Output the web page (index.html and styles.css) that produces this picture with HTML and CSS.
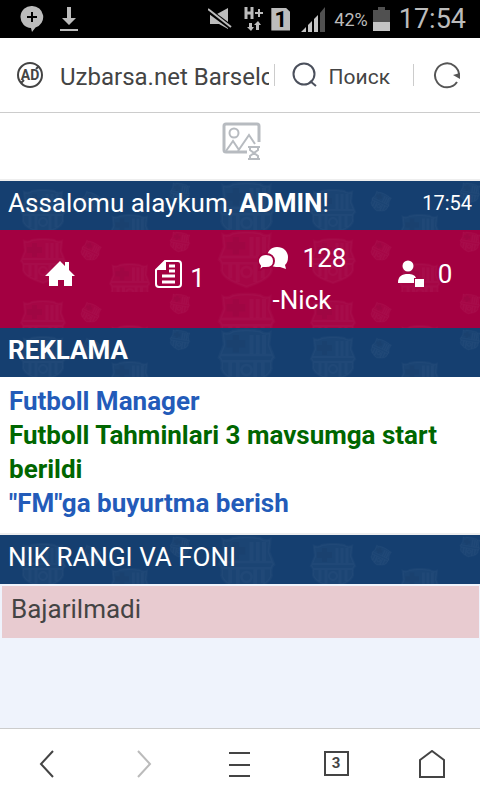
FILE: index.html
```html
<!DOCTYPE html>
<html lang="uz">
<head>
<meta charset="utf-8">
<meta name="viewport" content="width=device-width, initial-scale=1">
<title>Uzbarsa.net Barselona</title>
<link rel="stylesheet" href="styles.css">
</head>
<body>
<div class="status">
  <svg width="24" height="28" viewBox="0 0 24 28"><path fill="#bcbcbc" d="M12 1a11 11 0 0 1 3.500 21.500L12 27l-1-4A11 11 0 0 1 12 1z"/><path stroke="#000" stroke-width="2" d="M12 7v10M7 12h10"/></svg>
  <svg class="download" width="18" height="24" viewBox="0 0 18 24"><path fill="#bcbcbc" d="M7 0h4v11h5l-7 7-7-7h5zM0 22h18v2H0z"/></svg>
  <svg class="mute" width="24" height="24" viewBox="0 0 24 24"><path fill="#bcbcbc" d="M2 7h7L20 1v21l-9-5H2z"/><path stroke="#000" stroke-width="5" d="M0 3l24 18"/><path stroke="#bcbcbc" stroke-width="2" d="M0 2l23 18"/></svg>
  <svg class="data" width="19" height="26" viewBox="0 0 19 26"><path fill="none" stroke="#bcbcbc" stroke-width="3" d="M2 1v12M8 1v12M2 7h6"/><path stroke="#bcbcbc" stroke-width="2" d="M11 7h8M15 3v8"/><path fill="#bcbcbc" d="M5 17h3v4h2l-3 4-4-4h2zM12 24v-5h-2l4-4 3 4h-2v5z"/></svg>
  <span class="sim">1</span>
  <svg class="signal" width="24" height="25" viewBox="0 0 24 25"><path fill="#c4c4c4" d="M0 25l5-5v5zM7 18l4-4v11H7zM13 12l4-4v17h-4z"/><path fill="#505050" d="M19 6l5-6v25h-5z"/></svg>
  <span class="percent">42%</span>
  <svg class="battery" width="17" height="24" viewBox="0 0 17 24"><path fill="#505050" d="M0 3h5V0h7v3h5v12H0z"/><path fill="#c4c4c4" d="M0 15h17v9H0z"/></svg>
  <span class="clock">17:54</span>
</div>

<header class="browser">
  <button class="plain" aria-label="AD">
    <svg width="28" height="28" viewBox="0 0 28 28" fill="none" stroke="#444" stroke-width="2"><circle cx="14" cy="14" r="12"/><text x="14" y="19" text-anchor="middle" class="ad">AD</text><path d="M5 22l3-3M20 8l3-3"/></svg>
  </button>
  <a class="address" href="#">Uzbarsa.net Barselona</a>
  <button class="plain search">
    <svg width="25" height="26" viewBox="0 0 25 26" fill="none" stroke="#4b505c" stroke-width="2"><circle cx="12" cy="12" r="10.500"/><path d="M18 19l6 5"/></svg>
    <span>Поиск</span>
  </button>
  <button class="plain reload" aria-label="Reload">
    <svg width="28" height="28" viewBox="0 0 28 28"><path fill="none" stroke="#555" stroke-width="2" d="M24 21A12 12 0 1 1 26 15"/><path fill="#555" d="M20 14l7-2v6z"/></svg>
  </button>
</header>

<main>
  <div class="banner">
    <svg width="39" height="39" viewBox="0 0 39 39" fill="none" stroke="#b7bbc0" stroke-width="2"><path stroke-width="3" d="M25 30H4q-2 0-2-2V4q0-2 2-2h31q2 0 2 2v16"/><circle cx="12" cy="11" r="4.500"/><path d="M4 29l7-10 6 9M16 29L27 13l6 9"/><path d="M26 25h12M26 37h12M28 25v3l4 3-4 3v3M36 25v3l-4 3 4 3v3"/></svg>
  </div>
  <div class="bar greeting">
    <span>Assalomu alaykum, <b>ADMIN</b>!</span>
    <time>17:54</time>
  </div>
  <nav class="menu">
    <a href="#" aria-label="Home"><svg width="30" height="26" viewBox="0 0 30 26"><path fill="#fff" d="M15 0l5 5V1h4v8l6 6h-3v10h-8v-6h-6v6H4V15H0z"/></svg></a>
    <a href="#" class="news"><svg width="27" height="30" viewBox="0 0 27 30" fill="none" stroke="#fff"><path stroke-width="2" d="M10 2h13q3 0 3 3v20q0 3-3 3H4q-3 0-3-3V11z"/><path fill="#fff" stroke="none" d="M1 11L11 1v10z"/><path stroke-width="3" d="M14 7h6M14 12h6M7 17h13M7 23h13"/></svg><span>1</span></a>
    <a href="#" class="chat"><span><svg width="31" height="25" viewBox="0 0 31 25"><path fill="#fff" d="M19 1c7 0 11 5 11 10 0 4-1 6-3 8l1 4-6-2-4 0C10 20 9 16 9 11S13 1 19 1z"/><path fill="#fff" stroke="#a30041" stroke-width="2" d="M8 8c5 0 8 3 8 7s-3 7-8 7l-3 0-4 3 1-5c-5-6 0-12 6-12z"/></svg>128</span><span>-Nick</span></a>
    <a href="#" class="guests"><svg width="26" height="28" viewBox="0 0 26 28"><g fill="#fff"><circle cx="10" cy="6" r="5.500"/><path d="M0 23c0-7 4-9 10-9 4 0 7 1 8 4h-2v5zM17 19h9v8h-9z"/></g></svg><span>0</span></a>
  </nav>
  <h2 class="bar"><b>REKLAMA</b></h2>
  <div class="links">
    <a href="#">Futboll Manager</a>
    <a href="#" class="green">Futboll Tahminlari 3 mavsumga start berildi</a>
    <a href="#">"FM"ga buyurtma berish</a>
  </div>
  <h2 class="bar">NIK RANGI VA FONI</h2>
  <p class="alert">Bajarilmadi</p>
</main>

<footer class="toolbar">
  <button class="plain" aria-label="Back"><svg width="28" height="28" viewBox="0 0 28 28" fill="none" stroke="#444" stroke-width="2"><path d="M19 1L7 14l12 13"/></svg></button>
  <button class="plain" aria-label="Forward"><svg width="28" height="28" viewBox="0 0 28 28" fill="none" stroke="#bbb" stroke-width="2"><path d="M8 1l12 13L8 27"/></svg></button>
  <button class="plain" aria-label="Menu"><svg width="28" height="28" viewBox="0 0 28 28" stroke="#444" stroke-width="2"><path d="M3 3h21M3 15h21M3 26h21"/></svg></button>
  <button class="plain"><span class="tabs">3</span></button>
  <button class="plain" aria-label="Home"><svg width="28" height="28" viewBox="0 0 28 28" fill="none" stroke="#444" stroke-width="2"><path d="M2 10l12-9 12 9v17H2z"/></svg></button>
</footer>
</body>
</html>
```
FILE: styles.css
```css
* { box-sizing: border-box; }
body {
  margin: 0;
  min-height: 100vh;
  display: flex;
  flex-direction: column;
  background: #eff3fc;
  color: #444;
  font: 26px/34px Roboto, sans-serif;
}
svg { display: block; flex: none; }
a { color: inherit; text-decoration: none; }
.plain {
  display: flex;
  align-items: center;
  justify-content: center;
  padding: 0;
  border: 0;
  background: none;
  color: inherit;
  font: inherit;
}

.status {
  display: flex;
  align-items: center;
  height: 38px;
  padding: 0 14px 0 20px;
  background: #000;
  color: #bcbcbc;
}
.download { margin-left: 16px; }
.mute { margin-left: auto; }
.data { margin-left: 12px; }
.sim {
  width: 19px;
  margin-left: 8px;
  background: #bcbcbc;
  color: #000;
  clip-path: polygon(0 0, 75% 0, 100% 20%, 100% 100%, 0 100%);
  font-size: 22px;
  font-weight: 700;
  line-height: 23px;
  text-align: center;
}
.signal { margin-left: 11px; }
.percent { margin-left: 9px; padding-top: 2px; font-size: 18px; }
.battery { margin-left: 5px; }
.clock { margin-left: 9px; font-size: 27px; }

.browser {
  display: flex;
  align-items: center;
  height: 75px;
  padding: 0 19px 0 16px;
  border-bottom: 1px solid #ccc;
  background: #fff;
}
.ad { fill: #444; stroke: none; font-size: 14px; font-weight: 700; }
.address {
  flex: 1;
  min-width: 0;
  margin: 4px 5px 0 16px;
  overflow: hidden;
  font-size: 24px;
  white-space: nowrap;
}
.search, .reload { height: 22px; border-left: 1px solid #ccc; }
.search { gap: 12px; padding: 0 23px 0 17px; font-size: 21px; }
.search span { padding-top: 4px; }
.reload { padding-left: 19px; }

main { flex: 1; }
.banner {
  display: flex;
  justify-content: center;
  height: 68px;
  padding: 9px 0 0 2px;
  border-bottom: 2px solid #eee;
  background: #fff;
}
.bar, .menu {
  background-image: url("data:image/svg+xml,%3Csvg xmlns='http://www.w3.org/2000/svg' xmlns:xlink='http://www.w3.org/1999/xlink' width='290' height='62'%3E%3Cdefs%3E%3Cg id='c'%3E%3Cpath d='M3 2Q7 4 11 1Q22-1 33 1Q37 4 41 2L40 12L44 22Q41 24 42 31C40 38 30 41 22 44C14 41 4 38 2 31Q3 24 0 22L4 12z' fill='%23fff' fill-opacity='.025'/%3E%3Cg fill='none' stroke='%23fff' stroke-opacity='.025' stroke-width='2'%3E%3Cpath d='M3 2Q7 4 11 1Q22-1 33 1Q37 4 41 2L40 12L44 22Q41 24 42 31C40 38 30 41 22 44C14 41 4 38 2 31Q3 24 0 22L4 12zM1 20H43M1 25H43'/%3E%3Cpath stroke-width='3' d='M26 4V19M31 4V19M36 4V19M9 26V37M15 26V40M29 26V40M35 26V37'/%3E%3Ccircle cx='22' cy='32' r='4'/%3E%3C/g%3E%3Cpath d='M11 4h5v4h5v6h-5v4h-5v-4H6V8h5z' fill='%23000' fill-opacity='.04'/%3E%3C/g%3E%3C/defs%3E%3Cuse xlink:href='%23c' x='21' y='9'/%3E%3Cuse xlink:href='%23c' transform='translate(110 34) scale(.9)'/%3E%3Cuse xlink:href='%23c' transform='translate(219 2) scale(1.25)'/%3E%3Cuse xlink:href='%23c' transform='translate(86 9) rotate(25) scale(.42)'/%3E%3Cuse xlink:href='%23c' transform='translate(172 1) rotate(10) scale(.44)'/%3E%3C/svg%3E");
}
.bar {
  display: flex;
  align-items: center;
  justify-content: space-between;
  height: 49px;
  margin: 0;
  padding: 0 8px 5px;
  background-color: #153f70;
  color: #fff;
  font-size: 26px;
  font-weight: 400;
}
.bar time { font-size: 20px; }
.menu {
  display: grid;
  grid-template-columns: repeat(4, 1fr);
  height: 98px;
  background-color: #a30041;
  color: #fff;
}
.menu a {
  display: flex;
  align-items: center;
  justify-content: center;
  padding-bottom: 10px;
}
.news { gap: 8px; }
.news span { padding-top: 8px; }
.menu .chat { flex-direction: column; padding: 0 0 0 4px; line-height: 42px; }
.chat span { display: flex; align-items: center; gap: 14px; }
.guests { gap: 14px; padding-left: 10px; }

.links {
  padding: 7px 9px 13px;
  border-bottom: 2px solid #eee;
  background: #fff;
  color: #235bb9;
  font-weight: 700;
}
.links a { display: block; }
.links .green { color: #060; }
.alert {
  height: 52px;
  margin: 2px 1px 0 2px;
  padding: 6px 9px;
  background: #e8cbd0;
}

.toolbar {
  display: grid;
  grid-template-columns: repeat(5, 1fr);
  height: 72px;
  padding-bottom: 2px;
  border-top: 1px solid #ccc;
  background: #fff;
}
.tabs {
  width: 25px;
  border: 2px solid #444;
  font-size: 15px;
  font-weight: 700;
  line-height: 21px;
}
```
